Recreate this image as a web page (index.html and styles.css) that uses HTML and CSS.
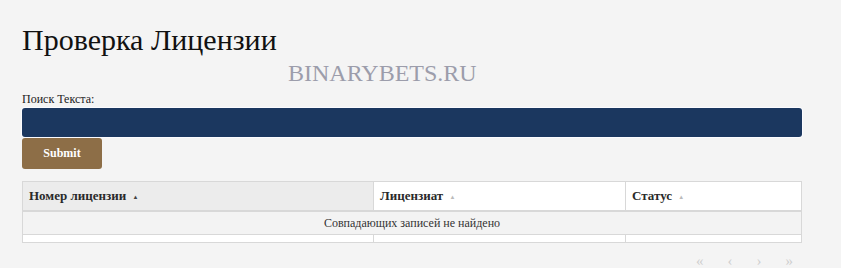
FILE: index.html
```html
<!DOCTYPE html>
<html>
<head>
    <title>Проверка Лицензии</title>
    <link rel="stylesheet" href="styles.css">
</head>
<body>
    <div class="container">
        <h1 class="page-title">Проверка Лицензии</h1>
        <div class="watermark">BINARYBETS.RU</div>

        <form class="search-form" onsubmit="return false;">
            <label class="search-label" for="searchText">Поиск Текста:</label>
            <input class="search-input" id="searchText" type="text">
            <button class="submit-btn" type="submit">Submit</button>
        </form>

        <table class="license-table">
            <thead>
                <tr>
                    <th class="col-number sorted">Номер лицензии <span class="sort">&#9650;</span></th>
                    <th class="col-holder">Лицензиат <span class="sort light">&#9650;</span></th>
                    <th class="col-status">Статус <span class="sort light">&#9650;</span></th>
                </tr>
            </thead>
            <tbody>
                <tr class="empty-row">
                    <td colspan="3">Совпадающих записей не найдено</td>
                </tr>
                <tr class="spacer-row">
                    <td></td>
                    <td></td>
                    <td></td>
                </tr>
            </tbody>
        </table>

        <div class="pager">
            <span>&laquo;</span>
            <span>&lsaquo;</span>
            <span>&rsaquo;</span>
            <span>&raquo;</span>
        </div>
    </div>
</body>
</html>
```

FILE: styles.css
```css
body {
    margin: 0;
    background: #f4f4f4;
    font-family: "Liberation Serif", "DejaVu Serif", serif;
    color: #222;
}
.container {
    position: relative;
    width: 780px;
    padding: 22px 0 0 22px;
}
.page-title {
    margin: 0;
    font-size: 30px;
    font-weight: normal;
    line-height: 36px;
    color: #111;
}
.watermark {
    position: absolute;
    left: 288px;
    top: 60px;
    font-size: 24px;
    color: #9c9dab;
}
.search-form {
    margin-top: 33px;
}
.search-label {
    display: block;
    font-size: 12px;
    line-height: 17px;
    color: #222;
}
.search-input {
    display: block;
    box-sizing: border-box;
    width: 780px;
    height: 29px;
    margin: 0;
    border: 0;
    border-radius: 3px;
    background: #1b375f;
    box-shadow: 0 0 0 1px #fbfbff;
}
.submit-btn {
    display: block;
    width: 80px;
    height: 31px;
    margin-top: 1px;
    border: 0;
    border-radius: 3px;
    background: #8d6e47;
    color: #fff;
    font-family: "Liberation Serif", serif;
    font-size: 12px;
    font-weight: bold;
}
.license-table {
    width: 780px;
    margin-top: 12px;
    border-collapse: collapse;
    font-size: 12px;
}
.license-table th {
    height: 28px;
    padding: 0 6px;
    text-align: left;
    font-size: 13px;
    font-weight: bold;
    background: #fff;
    border: 1px solid #d8d8d8;
    border-bottom: 2px solid #d8d8d8;
    color: #2a2a2a;
}
.license-table th.sorted {
    background: #ececec;
}
.col-number {
    width: 338px;
}
.col-holder {
    width: 239px;
}
.sort {
    display: inline-block;
    margin-left: 3px;
    font-size: 6px;
    vertical-align: middle;
    color: #444;
}
.sort.light {
    color: #bbb;
}
.empty-row td {
    height: 22px;
    padding: 0;
    text-align: center;
    background: #f3f3f3;
    border: 1px solid #d8d8d8;
    color: #333;
}
.spacer-row td {
    height: 7px;
    padding: 0;
    background: #fff;
    border: 1px solid #d8d8d8;
    border-top: 0;
}
.pager {
    display: flex;
    justify-content: flex-end;
    gap: 24px;
    width: 771px;
    margin-top: 13px;
    font-size: 15px;
    line-height: 10px;
    color: #cfcfcf;
}
```
